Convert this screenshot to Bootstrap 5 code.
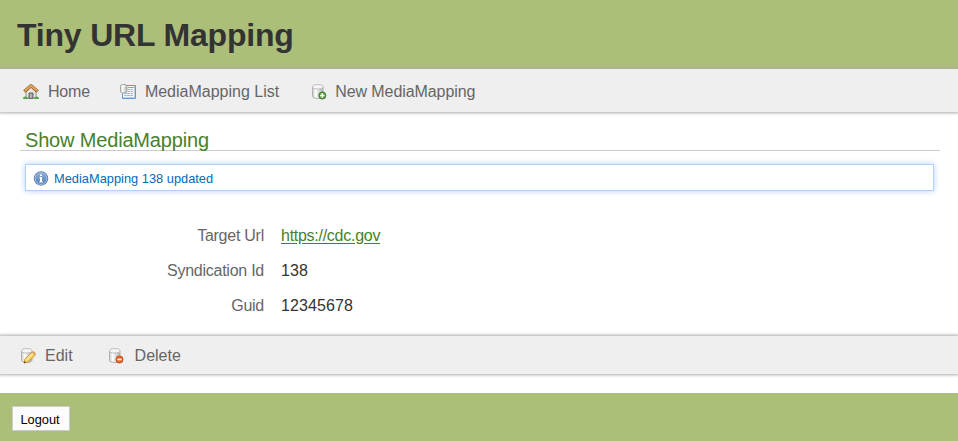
<!DOCTYPE html>
<html lang="en">
<head>
<meta charset="utf-8">
<meta name="viewport" content="width=device-width, initial-scale=1">
<title>Show MediaMapping</title>
<link href="https://cdn.jsdelivr.net/npm/bootstrap@5.3.0/dist/css/bootstrap.min.css" rel="stylesheet">
<style>
body{font-family:"Liberation Sans",Arial,sans-serif;font-size:16px;line-height:20px;color:#333;background:#fff}
.site-head{height:69px;background:#abbf78;padding-left:17px}
.site-head h1{font-size:32px;line-height:38px;color:#333;letter-spacing:-.19px}
.tool-strip{background:#efefef;box-shadow:0 0 3px 1px #aaa;position:relative}
.tool-strip a{color:#666;text-decoration:none}
.tool-strip svg{width:16px;height:16px;flex:none}
.top-strip{height:43px;padding:2px 0 0 23px}
.top-strip a{gap:9px}
.home-link{margin-right:30px;letter-spacing:-.2px}
.list-link{margin-right:32px}
.new-link{letter-spacing:-.08px}
.top-strip .new-link{gap:8px}
.page-title{margin:17px 18px 0 20px;padding-left:5px;height:22px;font-size:20px;line-height:22px;color:#48802c;border-bottom:1px solid #ccc;letter-spacing:-.17px}
.notice{margin:13px 24px 0 25px;height:27px;padding:2px 0 0 7px;font-size:12.8px;color:#006dba;border:1px solid #b2d1ff;box-shadow:0 0 6px #b2d1ff;gap:5px;letter-spacing:.02px}
.fields{margin:35px 0 0;gap:15px}
.fields dt{width:264px;font-weight:400;color:#666;text-align:right;letter-spacing:-.25px}
.fields dd{margin:0 0 0 17px;letter-spacing:.1px}
.fields a{color:#48802c;letter-spacing:-.27px;text-underline-offset:2px}
.low-strip{height:38px;margin-top:20px;padding:1px 0 0 20px}
.low-strip a{gap:9px}
.edit-link{margin-right:35px}
.low-strip .delete-link{gap:11px}
.site-foot{height:48px;margin-top:19px;background:#abbf78;padding:13px 0 0 12px}
.logout{width:58px;height:25px;padding:2px 2px 0 0;font-size:12.8px;line-height:20px;color:#000;background:#fcfcfc;border:1px solid #ccc}
</style>
<script src="https://cdn.jsdelivr.net/npm/bootstrap@5.3.0/dist/js/bootstrap.bundle.min.js"></script>
</head>
<body>
<svg width="0" height="0" class="position-absolute" aria-hidden="true">
  <defs>
    <linearGradient id="metal"><stop offset="0" stop-color="#c8c8c8"/><stop offset=".3" stop-color="#fff"/><stop offset=".65" stop-color="#d5d5d5"/><stop offset="1" stop-color="#b5b5b5"/></linearGradient>
    <linearGradient id="blue" x2="0" y2="1"><stop offset="0" stop-color="#89add8"/><stop offset="1" stop-color="#5580b5"/></linearGradient>
    <symbol id="drum" viewBox="0 0 16 16"><path d="M1.500 3v9.300c0 1.300 2.200 2.200 5.300 2.200s5.200-.9 5.200-2.200V3z" fill="url(#metal)" stroke="#b0b0b0"/><ellipse cx="6.750" cy="2.800" rx="5.250" ry="2.200" fill="#f6f6f6" stroke="#bcbcbc"/></symbol>
  </defs>
</svg>
<header class="site-head d-flex align-items-center"><h1 class="m-0 fw-bold">Tiny URL Mapping</h1></header>
<nav class="tool-strip top-strip d-flex align-items-center">
  <a href="#" class="home-link d-flex align-items-center">
    <svg viewBox="0 0 16 16"><path d="M3 8l5-5 5 5v6H3z" fill="#e8e7e2" stroke="#99958c"/><path d="M6 14.500V9h4v5.500z" fill="#999" stroke="#666"/><path d="M7.500 10h1v4h-1z" fill="#ccc"/><path d="M1.300 7.500L8 1.800l6.700 5.700" fill="none" stroke="#9b6026" stroke-width="3.400" stroke-linejoin="round"/><path d="M1.600 7.100L8 1.800l6.400 5.300" fill="none" stroke="#dfa45c" stroke-width="2" stroke-linejoin="round"/><path d="M0 15c0-3 3-3.200 5-1v1zM16 15c0-3-3-3.200-5-1v1z" fill="#55a84b"/></svg>
    <span>Home</span></a>
  <a href="#" class="list-link d-flex align-items-center">
    <svg viewBox="0 0 16 16"><path d="M2.500 1.500h13v13h-13z" fill="#f7fbff" stroke="#6597d5"/><path d="M3 13.500h12M14.500 2v12" stroke="#b5d1f1"/><path d="M8 3.500h6" stroke="#82b974"/><path d="M4 9.500h9M4 11.500h9M8 5.500h5M8 7.500h5" stroke="#91b5df"/><path d="M6.500 8v6M10.500 5v8" stroke="#d2e4f7"/><rect x=".5" y=".5" width="6.500" height="8.500" rx="2" fill="url(#metal)" stroke="#a5a5a5"/><path d="M2 2.300h3.500" stroke="#f9f9f9"/></svg>
    <span>MediaMapping List</span></a>
  <a href="#" class="new-link d-flex align-items-center">
    <svg viewBox="0 0 16 16"><use href="#drum"/><circle cx="11.300" cy="11.500" r="3.500" fill="#61a444" stroke="#347b23"/><path d="M11.300 9.300v4.400M9.100 11.500h4.400" stroke="#fff" stroke-width="1.500"/></svg>
    <span>New MediaMapping</span></a>
</nav>
<main>
  <h2 class="page-title mb-0 fw-normal">Show MediaMapping</h2>
  <div class="notice d-flex align-items-center" role="status">
    <svg width="16" height="16" viewBox="0 0 16 16"><circle cx="8" cy="7.500" r="7.200" fill="#527bb2"/><circle cx="8" cy="7.500" r="5.900" fill="url(#blue)" stroke="#b9cfea" stroke-width=".8"/><path d="M7 3.500h2V5H7zM6.500 6H9v4.500h.8v1H6.300v-1H7V7h-.5z" fill="#fff"/></svg>
    <span>MediaMapping 138 updated</span>
  </div>
  <dl class="fields d-flex flex-column">
    <div class="d-flex"><dt>Target Url</dt><dd><a href="#">https://cdc.gov</a></dd></div>
    <div class="d-flex"><dt>Syndication Id</dt><dd>138</dd></div>
    <div class="d-flex"><dt>Guid</dt><dd>12345678</dd></div>
  </dl>
</main>
<div class="tool-strip low-strip d-flex align-items-center">
  <a href="#" class="edit-link d-flex align-items-center">
    <svg viewBox="0 0 16 16"><use href="#drum"/><path d="M4 15l1-4 7.500-7 3 3-7.500 7z" fill="#f9cd60" stroke="#c58e35" stroke-width=".9"/><path d="M6 12l7-6.500" stroke="#fff0a9" stroke-width="1.300"/><path d="M12 4.500l1-1c1-.8 3.300 1.300 2.500 2.500l-1 1z" fill="#dea069"/><path d="M3.800 15.200l.6-2 1.500 1.500z" fill="#4b3c2b"/></svg>
    <span>Edit</span></a>
  <a href="#" class="delete-link d-flex align-items-center">
    <svg viewBox="0 0 16 16"><use href="#drum"/><circle cx="11.500" cy="11.500" r="3.500" fill="#ed6935" stroke="#c64b15"/><path d="M9.400 11.500h4.200" stroke="#fff" stroke-width="1.500"/></svg>
    <span>Delete</span></a>
</div>
<footer class="site-foot"><button type="button" class="logout d-block rounded-0">Logout</button></footer>
</body>
</html>
